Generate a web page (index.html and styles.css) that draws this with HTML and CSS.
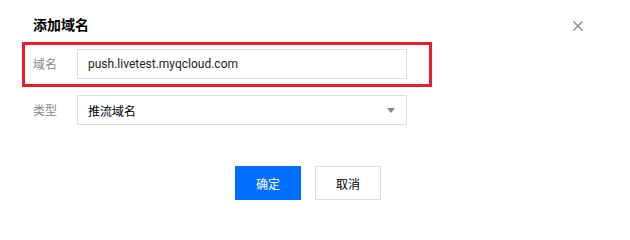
FILE: index.html
```html
<!DOCTYPE html>
<html lang="zh-CN">
<head>
<meta charset="utf-8">
<title>添加域名</title>
<link rel="stylesheet" href="styles.css">
</head>
<body>
<div class="dialog">
  <div class="header">
    <h3 class="title">添加域名</h3>
    <span class="close" aria-label="关闭">
      <svg width="10" height="10" viewBox="0 0 10 10"><path d="M0.5 0.5 L9.5 9.5 M9.5 0.5 L0.5 9.5" stroke="#888" stroke-width="1.4" fill="none"/></svg>
    </span>
  </div>
  <div class="form">
    <div class="row row-marked">
      <label class="label">域名</label>
      <div class="field input">push.livetest.myqcloud.com</div>
    </div>
    <div class="row row-plain">
      <label class="label">类型</label>
      <div class="field select">
        <span>推流域名</span>
        <span class="caret"></span>
      </div>
    </div>
  </div>
  <div class="footer">
    <button class="btn btn-primary">确定</button>
    <button class="btn btn-default">取消</button>
  </div>
</div>
</body>
</html>
```

FILE: styles.css
```css
html, body {
  margin: 0;
  padding: 0;
  background: #fff;
}
body {
  width: 630px;
  height: 203px;
  font-family: Roboto, Arial, "Noto Sans CJK SC", sans-serif;
  font-size: 12px;
  color: #000;
}
.dialog {
  padding-top: 15px;
}
.header {
  display: flex;
  justify-content: space-between;
  align-items: flex-start;
  padding: 0 47px 0 33px;
  height: 27px;
}
.title {
  margin: 0;
  font-size: 14px;
  font-weight: bold;
  line-height: 18px;
  color: #000;
  font-family: "Noto Sans CJK SC", sans-serif;
}
.close {
  display: block;
  width: 10px;
  height: 10px;
  margin-top: 6px;
}
.close svg { display: block; }
.form {
  display: flex;
  flex-direction: column;
}
.row {
  display: flex;
  align-items: center;
  margin-left: 22px;
  width: 410px;
  box-sizing: border-box;
  padding: 4px 22px 5px 8px;
  border: 3px solid transparent;
}
.row-marked {
  border-color: #ec1c2c;
}
.row-plain {
  margin-top: 1px;
}
.label {
  width: 44px;
  flex: none;
  color: #888;
  font-family: "Noto Sans CJK SC", sans-serif;
  font-size: 12px;
  line-height: 16px;
}
.field {
  flex: 1;
  height: 30px;
  box-sizing: border-box;
  border: 1px solid #ddd;
  padding: 0 10px;
  display: flex;
  align-items: center;
  font-size: 12px;
  color: #000;
}
.input {
  font-family: Roboto, Arial, sans-serif;
  color: #222;
}
.select {
  justify-content: space-between;
  font-family: "Noto Sans CJK SC", sans-serif;
}
.caret {
  width: 0;
  height: 0;
  border-left: 4px solid transparent;
  border-right: 4px solid transparent;
  border-top: 5px solid #888;
  margin-right: 1px;
}
.footer {
  display: flex;
  gap: 14px;
  padding-left: 235px;
  margin-top: 33px;
}
.btn {
  width: 66px;
  height: 34px;
  box-sizing: border-box;
  font-family: "Noto Sans CJK SC", sans-serif;
  font-size: 12px;
  margin: 0;
  padding: 0;
  cursor: pointer;
}
.btn-primary {
  background: #006eff;
  border: 1px solid #006eff;
  color: #fff;
}
.btn-default {
  background: #fff;
  border: 1px solid #ddd;
  color: #000;
}
```
